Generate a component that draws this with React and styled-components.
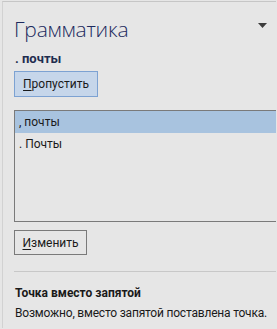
import React from "react";
import styled, { createGlobalStyle } from "styled-components";

const Global = createGlobalStyle`
  html, body { margin: 0; padding: 0; background: #e6e6e6; }
  body { font-family: Roboto, "Noto Sans", sans-serif; overflow: hidden; }
`;

const Pane = styled.div`
  width: 274px;
  height: 327px;
  margin: 1px 0 0 2px;
  border-top: 1px solid #c6c6c6;
  border-left: 1px solid #d2d2d2;
  background: #e6e6e6;
  padding: 0 0 0 11px;
  box-sizing: border-box;
  overflow: hidden;
`;

const Header = styled.div`
  display: flex;
  align-items: flex-start;
  justify-content: space-between;
  padding: 13px 9px 0 0;
  height: 35px;
`;

const Title = styled.h1`
  margin: 0;
  font-family: "Open Sans", "Noto Sans", sans-serif;
  font-weight: 300;
  font-size: 21px;
  line-height: 28px;
  color: #1d2a5e;
  letter-spacing: -0.2px;
`;

const Caret = styled.svg`
  margin-top: 8px;
`;

const Word = styled.div`
  font-weight: 700;
  font-size: 13px;
  line-height: 16px;
  color: #1f2d4f;
  margin-top: 1px;
  padding-left: 1px;
`;

const Button = styled.button`
  font-family: Roboto, "Noto Sans", sans-serif;
  font-size: 12px;
  color: #1a1a1a;
  height: ${p => p.$h}px;
  width: ${p => p.$w}px;
  padding: 0;
  margin: ${p => p.$mt}px 0 0 0;
  background: ${p => (p.$primary ? "#c6d6ea" : "#e6e6e6")};
  border: 1px solid ${p => (p.$primary ? "#7da2d2" : "#7a7a7a")};
  border-radius: 0;
  display: flex;
  align-items: center;
  justify-content: center;
  u { text-decoration: underline; text-underline-offset: 2px; }
`;

const List = styled.div`
  margin-top: 13px;
  width: 280px;
  height: 112px;
  border: 1px solid #7a7a7a;
  box-sizing: border-box;
`;

const Item = styled.div`
  height: 22px;
  display: flex;
  align-items: center;
  padding-left: 4px;
  font-size: 12px;
  color: #1a1a1a;
  background: ${p => (p.$selected ? "#a8c3df" : "transparent")};
`;

const Divider = styled.div`
  margin-top: 16px;
  height: 1px;
  background: #c8c8c8;
`;

const Heading = styled.div`
  margin-top: 13px;
  font-weight: 700;
  font-size: 12px;
  line-height: 16px;
  color: #1a1a1a;
  padding-left: 1px;
  white-space: nowrap;
`;

const Desc = styled.div`
  margin-top: 4px;
  font-size: 12px;
  line-height: 16px;
  letter-spacing: -0.2px;
  color: #1a1a1a;
  padding-left: 1px;
  white-space: nowrap;
`;

export default function App() {
  return (
    <>
      <Global />
      <Pane>
        <Header>
          <Title>Грамматика</Title>
          <Caret width="9" height="5" viewBox="0 0 9 5">
            <polygon points="0,0 9,0 4.5,5" fill="#3c3c3c" />
          </Caret>
        </Header>
        <Word>. почты</Word>
        <Button $primary $w={84} $h={26} $mt={4}>
          <span><u>П</u>ропустить</span>
        </Button>
        <List>
          <Item $selected>, почты</Item>
          <Item>. Почты</Item>
        </List>
        <Button $w={73} $h={25} $mt={8}>
          <span><u>И</u>зменить</span>
        </Button>
        <Divider />
        <Heading>Точка вместо запятой</Heading>
        <Desc>Возможно, вместо запятой поставлена точка.</Desc>
      </Pane>
    </>
  );
}
